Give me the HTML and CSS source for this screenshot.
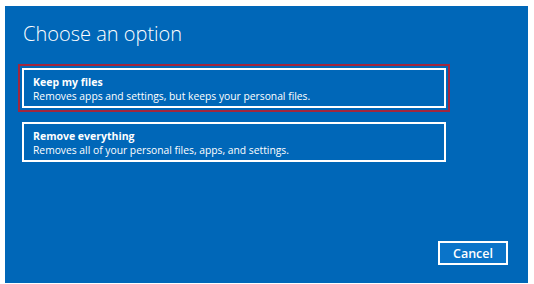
FILE: index.html
```html
<!DOCTYPE html>
<html lang="en">
<head>
    <meta charset="UTF-8">
    <meta name="viewport" content="width=device-width, initial-scale=1.0">
    <title>Choose an option</title>
    <link rel="stylesheet" href="styles.css">
</head>
<body>
    <div class="panel">
        <h1>Choose an option</h1>
        <div class="options">
            <button class="option selected" type="button">
                <span class="option-title">Keep my files</span>
                <span class="option-desc">Removes apps and settings, but keeps your personal files.</span>
            </button>
            <button class="option" type="button">
                <span class="option-title">Remove everything</span>
                <span class="option-desc">Removes all of your personal files, apps, and settings.</span>
            </button>
        </div>
        <div class="actions">
            <button class="cancel" type="button">Cancel</button>
        </div>
    </div>
</body>
</html>
```

FILE: styles.css
```css
body {
    margin: 0;
    background-color: #ffffff;
    font-family: "Open Sans", "Liberation Sans", sans-serif;
}

.panel {
    background-color: #0067b8;
    color: #ffffff;
    margin: 6px 6px 0 5px;
    height: 277px;
    box-sizing: border-box;
    padding: 0 20px 18px 17px;
    display: flex;
    flex-direction: column;
}

h1 {
    font-weight: 300;
    font-size: 20px;
    line-height: 28px;
    margin: 14px 0 0 1px;
}

.options {
    display: flex;
    flex-direction: column;
    gap: 14px;
    margin-top: 20px;
}

.option {
    width: 424px;
    height: 40px;
    box-sizing: border-box;
    border: 2px solid #ffffff;
    background: transparent;
    color: #ffffff;
    font-family: inherit;
    text-align: left;
    padding: 6px 0 0 9px;
    display: flex;
    flex-direction: column;
    cursor: pointer;
}

.option.selected {
    outline: 2px solid #a1273f;
    outline-offset: 2px;
}

.option-title {
    font-weight: 700;
    font-size: 10.5px;
    line-height: 13px;
}

.option-desc {
    font-size: 10.3px;
    line-height: 14px;
}

.actions {
    margin-top: auto;
    display: flex;
    justify-content: flex-end;
}

.cancel {
    width: 70px;
    height: 24px;
    border: 2px solid #ffffff;
    background-color: #0a74c9;
    color: #ffffff;
    font-family: inherit;
    font-weight: 600;
    font-size: 12.5px;
    padding: 0;
    cursor: pointer;
}
```
